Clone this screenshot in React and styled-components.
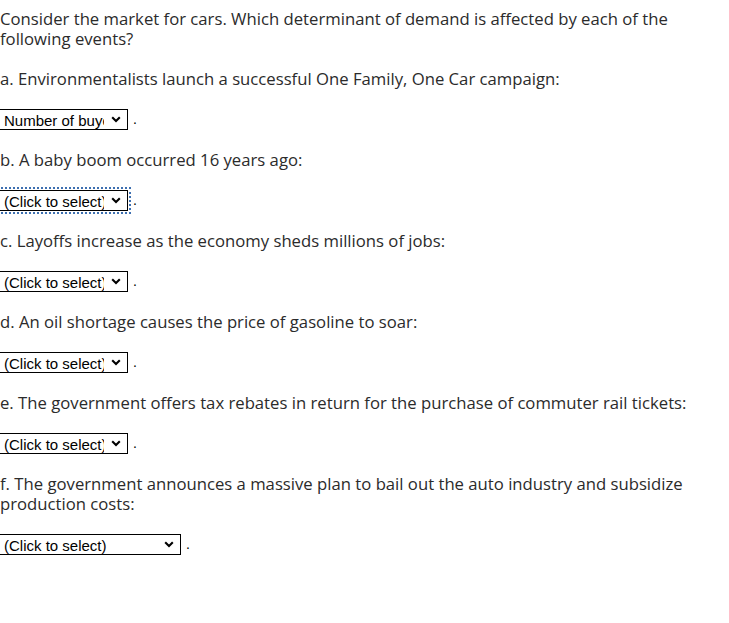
import React from "react";
import styled, { createGlobalStyle } from "styled-components";

const Global = createGlobalStyle`
  html, body { margin: 0; padding: 0; background: #fff; }
  body { font-family: "Open Sans", sans-serif; }
`;

const Page = styled.div`
  margin-left: -1px;
  padding-top: 9px;
  color: #2b2b2b;
  font-family: "Open Sans", "Noto Sans", sans-serif;
  font-size: 16.7px;
  line-height: 20px;
`;

const Intro = styled.p`
  margin: 0 0 20px 1px;
  max-width: 700px;
`;

const Item = styled.div`
  margin-bottom: 20px;
`;

const Question = styled.p`
  margin: 0 0 19px 1px;
  max-width: 710px;
`;

const Answer = styled.div`
  display: flex;
  align-items: center;
  gap: 5px;
  height: 22px;
`;

const SelectWrap = styled.span`
  position: relative;
  display: inline-flex;
  outline: ${(p) => (p.$focus ? "2px dotted #3d6fb0" : "none")};
  outline-offset: 1px;
`;

const Select = styled.select`
  appearance: none;
  -webkit-appearance: none;
  width: ${(p) => p.$w}px;
  height: 21px;
  box-sizing: border-box;
  border: 1px solid #000;
  border-radius: 0;
  background: #fff;
  color: #000;
  font-family: "Liberation Sans", Arial, sans-serif;
  font-size: 15px;
  line-height: 19px;
  padding: 1px ${(p) => (p.$w > 150 ? 30 : 23)}px 0 4px;
  margin: 0;
  outline: none;
  white-space: nowrap;
  overflow: hidden;
`;

const Chevron = styled.svg`
  position: absolute;
  right: 7px;
  top: 7px;
  width: 10px;
  height: 7px;
  pointer-events: none;
`;

const Dot = styled.span`
  font-family: "Liberation Sans", Arial, sans-serif;
  font-size: 14px;
  color: #000;
`;

const items = [
  { q: "a. Environmentalists launch a successful One Family, One Car campaign:", v: "Number of buyers", w: 129 },
  { q: "b. A baby boom occurred 16 years ago:", v: "(Click to select)", w: 129, focus: true },
  { q: "c. Layoffs increase as the economy sheds millions of jobs:", v: "(Click to select)", w: 129 },
  { q: "d. An oil shortage causes the price of gasoline to soar:", v: "(Click to select)", w: 129 },
  { q: "e. The government offers tax rebates in return for the purchase of commuter rail tickets:", v: "(Click to select)", w: 129 },
  { q: "f. The government announces a massive plan to bail out the auto industry and subsidize production costs:", v: "(Click to select)", w: 182 },
];

const options = [
  "(Click to select)",
  "Income",
  "Tastes",
  "Expectations",
  "Number of buyers",
  "Price of related goods",
];

export default function App() {
  return (
    <>
      <Global />
      <Page>
        <Intro>
          Consider the market for cars. Which determinant of demand is affected by each of the following events?
        </Intro>
        {items.map((it) => (
          <Item key={it.q}>
            <Question>{it.q}</Question>
            <Answer>
              <SelectWrap $focus={it.focus}>
                <Select $w={it.w} defaultValue={it.v}>
                  {options.map((o) => (
                    <option key={o} value={o}>{o}</option>
                  ))}
                </Select>
                <Chevron viewBox="0 0 10 7">
                  <polyline points="1.2,1.3 5,5 8.8,1.3" fill="none" stroke="#000" strokeWidth="2.1" />
                </Chevron>
              </SelectWrap>
              <Dot>.</Dot>
            </Answer>
          </Item>
        ))}
      </Page>
    </>
  );
}
